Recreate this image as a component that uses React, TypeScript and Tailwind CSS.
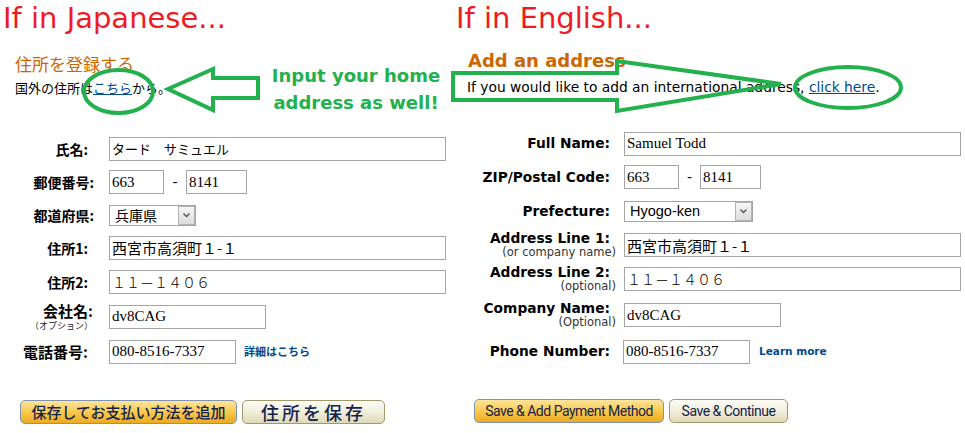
import React from "react";

const DV = "font-['DejaVu_Sans',Verdana,sans-serif]";
const JP = "font-['Noto_Sans_CJK_JP',sans-serif]";
const SERIF = "font-['Liberation_Serif',serif] text-[15px]";
const JPIN = "font-['Noto_Sans_CJK_JP',sans-serif]";

function Field({ w, font, children }: { w: string; font: string; children: React.ReactNode }) {
  return (
    <div
      className={`h-[24px] ${w} shrink-0 border border-[#a5a5a5] bg-white flex items-center pl-[2px] whitespace-nowrap overflow-hidden leading-none ${font}`}
    >
      {children}
    </div>
  );
}

function Select({ w, font, children }: { w: string; font: string; children: React.ReactNode }) {
  return (
    <div className={`h-[21px] ${w} shrink-0 border border-[#a5a5a5] bg-white flex items-center`}>
      <div className={`flex-1 pl-[5px] leading-none whitespace-nowrap ${font}`}>{children}</div>
      <div className="w-[17px] h-[19px] border border-[#b4b4b4] bg-linear-to-b from-[#f6f6f6] to-[#dcdcdc] flex items-center justify-center">
        <svg width="9" height="6" viewBox="0 0 9 6">
          <path d="M1.5 1.5 L4.5 4.5 L7.5 1.5" stroke="#555" strokeWidth="1.4" fill="none" />
        </svg>
      </div>
    </div>
  );
}

const GOLD =
  "h-[24px] shrink-0 rounded-[5px] border border-[#8193b0] bg-linear-to-b from-[#fde59a] via-[#f8c94c] to-[#eeaa1c] flex items-center justify-center text-[#13224f]";
const CREAM =
  "h-[24px] shrink-0 rounded-[5px] border border-[#a0996c] bg-linear-to-b from-[#fdfcf5] via-[#f1eedc] to-[#dfd9b6] flex items-center justify-center text-[#13224f]";

function JRow({
  h,
  pr,
  label,
  labelSize,
  sub,
  children,
}: {
  h: string;
  pr: string;
  label: string;
  labelSize: string;
  sub?: string;
  children: React.ReactNode;
}) {
  return (
    <div className={`flex items-center ${h}`}>
      <div className={`w-[109px] shrink-0 text-right ${pr} ${JP}`}>
        <div className={`font-bold ${sub ? "leading-[15px]" : "leading-[18px]"} ${labelSize}`}>{label}</div>
        {sub && <div className="mt-[3px] text-[9px] leading-[10px] text-[#222]">{sub}</div>}
      </div>
      {children}
    </div>
  );
}

function ERow({
  h,
  label,
  sub,
  children,
}: {
  h: string;
  label: string;
  sub?: string;
  children: React.ReactNode;
}) {
  return (
    <div className={`flex items-center ${h}`}>
      <div className={`w-[171px] shrink-0 text-right pr-[8px] ${DV}`}>
        <div className="font-bold text-[13.75px] leading-[15px] mr-[6px] whitespace-nowrap">{label}</div>
        {sub && <div className="text-[11.5px] leading-[13px] text-[#333] whitespace-nowrap">{sub}</div>}
      </div>
      {children}
    </div>
  );
}

function LeftPanel() {
  return (
    <div className="w-[453px] shrink-0 flex flex-col">
      <div className={`h-[50px] pt-[4px] pl-[3px] text-[29px] leading-none text-[#ed1c24] ${DV}`}>If in Japanese...</div>
      <div className={`mt-[4px] h-[20px] leading-[20px] pl-[15px] text-[17px] text-[#cc6600] ${JP}`}>住所を登録する</div>
      <div className={`mt-[6px] h-[16px] leading-[16px] pl-[15px] text-[13px] ${JP}`}>
        国外の住所は<span className="text-[#004b91] underline">こちら</span>から。
      </div>
      <div className="mt-[36px] flex flex-col">
        <JRow h="h-[33px]" pr="pr-[21px]" label="氏名:" labelSize="text-[14px]">
          <Field w="w-[337px]" font={`${JPIN} text-[13px]`}>タード　サミュエル</Field>
        </JRow>
        <JRow h="h-[34px]" pr="pr-[15px]" label="郵便番号:" labelSize="text-[14px]">
          <Field w="w-[55px]" font={SERIF}>663</Field>
          <span className={`w-[22px] text-center text-[14px] ${DV}`}>-</span>
          <Field w="w-[61px]" font={SERIF}>8141</Field>
        </JRow>
        <JRow h="h-[32px]" pr="pr-[15px]" label="都道府県:" labelSize="text-[14px]">
          <Select w="w-[87px]" font={`${JPIN} text-[14px]`}>兵庫県</Select>
        </JRow>
        <JRow h="h-[33px]" pr="pr-[21px]" label="住所1:" labelSize="text-[14px]">
          <Field w="w-[337px]" font={`${JPIN} text-[15px]`}>西宮市高須町１-１</Field>
        </JRow>
        <JRow h="h-[35px]" pr="pr-[21px]" label="住所2:" labelSize="text-[14px]">
          <Field w="w-[337px]" font={`${JPIN} text-[14px] font-light`}>１１－１４０６</Field>
        </JRow>
        <JRow h="h-[35px]" pr="pr-[16px]" label="会社名:" labelSize="text-[15px]" sub="（オプション）">
          <Field w="w-[157px]" font={SERIF}>dv8CAG</Field>
        </JRow>
        <JRow h="h-[35px]" pr="pr-[21px]" label="電話番号:" labelSize="text-[15px]">
          <Field w="w-[127px]" font={SERIF}>080-8516-7337</Field>
          <span className={`ml-[8px] text-[11px] font-bold text-[#004b91] ${JP}`}>詳細はこちら</span>
        </JRow>
      </div>
      <div className="mt-[31px] flex gap-[5px] pl-[20px]">
        <div className={`${GOLD} w-[217px] ${JP} text-[15px] font-medium`}>保存してお支払い方法を追加</div>
        <div className={`${CREAM} w-[143px] ${JP} text-[18px] font-medium tracking-[3px]`}>住所を保存</div>
      </div>
    </div>
  );
}

function RightPanel() {
  return (
    <div className="flex-1 flex flex-col">
      <div className={`h-[50px] pt-[4px] pl-[3px] text-[29px] leading-none text-[#ed1c24] ${DV}`}>If in English...</div>
      <div className={`mt-[1px] h-[20px] leading-[20px] pl-[15px] text-[18px] font-bold text-[#cc6600] ${DV}`}>Add an address</div>
      <div className={`mt-[8px] h-[16px] leading-[16px] pl-[14px] text-[13.8px] whitespace-nowrap ${DV}`}>
        If you would like to add an international address, <span className="text-[#004b91] underline">click here</span>.
      </div>
      <div className="mt-[32px] flex flex-col">
        <ERow h="h-[33px]" label="Full Name:">
          <Field w="w-[337px]" font={SERIF}>Samuel Todd</Field>
        </ERow>
        <ERow h="h-[34px]" label="ZIP/Postal Code:">
          <Field w="w-[55px]" font={SERIF}>663</Field>
          <span className={`w-[21px] text-center text-[14px] ${DV}`}>-</span>
          <Field w="w-[61px]" font={SERIF}>8141</Field>
        </ERow>
        <ERow h="h-[34px]" label="Prefecture:">
          <Select w="w-[129px]" font="font-['Liberation_Sans',Arial,sans-serif] text-[14.5px]">Hyogo-ken</Select>
        </ERow>
        <ERow h="h-[34px]" label="Address Line 1:" sub="(or company name)">
          <Field w="w-[337px]" font={`${JPIN} text-[15px]`}>西宮市高須町１-１</Field>
        </ERow>
        <ERow h="h-[34px]" label="Address Line 2:" sub="(optional)">
          <Field w="w-[337px]" font={`${JPIN} text-[14px] font-light`}>１１－１４０６</Field>
        </ERow>
        <ERow h="h-[38px]" label="Company Name:" sub="(Optional)">
          <Field w="w-[157px]" font={SERIF}>dv8CAG</Field>
        </ERow>
        <ERow h="h-[35px]" label="Phone Number:">
          <div className="-ml-[1px] flex items-center">
            <Field w="w-[127px]" font={SERIF}>080-8516-7337</Field>
            <span className={`ml-[9px] text-[10.5px] font-bold text-[#004b91] ${DV}`}>Learn more</span>
          </div>
        </ERow>
      </div>
      <div className="mt-[30px] flex gap-[5px] pl-[21px]">
        <div className={`${GOLD} w-[190px] font-['Roboto',sans-serif] text-[14px] tracking-[-0.5px]`}>Save &amp; Add Payment Method</div>
        <div className={`${CREAM} w-[119px] font-['Roboto',sans-serif] text-[14px] tracking-[-0.5px]`}>Save &amp; Continue</div>
      </div>
    </div>
  );
}

function Overlay() {
  return (
    <>
      <svg className="absolute left-0 top-0 pointer-events-none" width="965" height="433" viewBox="0 0 965 433">
        <g fill="none" stroke="#22b14c" strokeWidth="4" strokeLinejoin="miter">
          <ellipse cx="118.5" cy="91.5" rx="34.5" ry="21.5" />
          <polygon points="168,89 213,69 213,78 258,78 258,98 213,98 213,110" />
          <polygon points="453,73 617,73 617,61 781,84 617,111 617,100 453,100" />
          <ellipse cx="848" cy="87.5" rx="53" ry="20.5" />
        </g>
      </svg>
      <div
        className={`absolute left-[256px] top-[62px] w-[200px] text-center text-[18px] leading-[27px] font-bold text-[#22b14c] ${DV}`}
      >
        Input your home
        <br />
        address as well!
      </div>
    </>
  );
}

export default function App() {
  return (
    <div className="relative w-[965px] h-[433px] bg-white overflow-hidden flex text-black">
      <LeftPanel />
      <RightPanel />
      <Overlay />
    </div>
  );
}
